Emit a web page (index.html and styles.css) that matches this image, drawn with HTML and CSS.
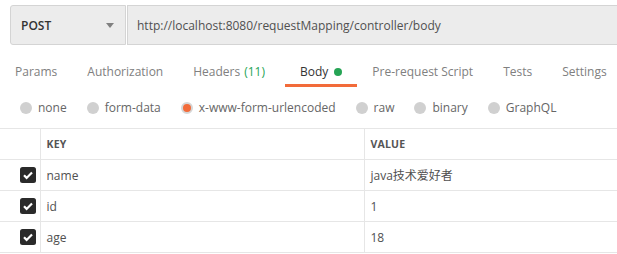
FILE: index.html
```html
<!DOCTYPE html>
<html>
<head>
<meta charset="utf-8">
<link rel="stylesheet" href="styles.css">
</head>
<body>
<div class="urlbar">
  <div class="method"><span class="method-name">POST</span><span class="caret"></span></div>
  <div class="url">http://localhost:8080/requestMapping/controller/body</div>
</div>
<div class="tabs">
  <div class="tab">Params</div>
  <div class="tab">Authorization</div>
  <div class="tab tab-headers">Headers <span class="count">(11)</span></div>
  <div class="tab active">Body <span class="dot"></span></div>
  <div class="tab">Pre-request Script</div>
  <div class="tab">Tests</div>
  <div class="tab">Settings</div>
</div>
<div class="radios">
  <div class="radio"><span class="circle"></span>none</div>
  <div class="radio"><span class="circle"></span>form-data</div>
  <div class="radio"><span class="circle checked"></span>x-www-form-urlencoded</div>
  <div class="radio"><span class="circle"></span>raw</div>
  <div class="radio"><span class="circle"></span>binary</div>
  <div class="radio"><span class="circle"></span>GraphQL</div>
</div>
<table class="params">
  <tr class="head"><th class="c-check"></th><th class="c-key">KEY</th><th>VALUE</th></tr>
  <tr><td class="c-check"><svg class="cb" width="16" height="16" viewBox="0 0 16 16"><rect width="16" height="16" rx="2.5" fill="#2a2a2a"/><path d="M4 8.3l2.6 2.6L12 5.4" fill="none" stroke="#fff" stroke-width="2.2"/></svg></td><td>name</td><td>java技术爱好者</td></tr>
  <tr><td class="c-check"><svg class="cb" width="16" height="16" viewBox="0 0 16 16"><rect width="16" height="16" rx="2.5" fill="#2a2a2a"/><path d="M4 8.3l2.6 2.6L12 5.4" fill="none" stroke="#fff" stroke-width="2.2"/></svg></td><td>id</td><td>1</td></tr>
  <tr><td class="c-check"><svg class="cb" width="16" height="16" viewBox="0 0 16 16"><rect width="16" height="16" rx="2.5" fill="#2a2a2a"/><path d="M4 8.3l2.6 2.6L12 5.4" fill="none" stroke="#fff" stroke-width="2.2"/></svg></td><td>age</td><td>18</td></tr>
</table>
</body>
</html>
```
FILE: styles.css
```css
body {
  margin: 0;
  background: #fff;
  font-family: "Open Sans", "Noto Sans CJK SC", sans-serif;
  font-size: 12px;
  color: #505050;
  overflow: hidden;
}
.urlbar {
  display: flex;
  margin: 5px 0 0 10px;
  height: 40px;
}
.method {
  box-sizing: border-box;
  width: 116px;
  background: #ececec;
  border: 1px solid #d4d4d4;
  border-radius: 3px 0 0 3px;
  display: flex;
  align-items: center;
  justify-content: space-between;
  padding: 0 11px 0 10px;
}
.method-name {
  color: #333;
  font-weight: 600;
}
.caret {
  width: 0;
  height: 0;
  border-left: 4px solid transparent;
  border-right: 4px solid transparent;
  border-top: 5px solid #808080;
}
.url {
  flex: 1;
  margin-left: 1px;
  background: #ececec;
  border: 1px solid #d4d4d4;
  border-right: none;
  display: flex;
  align-items: center;
  padding-left: 9px;
  color: #505050;
}
.tabs {
  display: flex;
  margin-top: 19px;
}
.tab {
  padding: 0 15px 4px;
  line-height: 16px;
  border-bottom: 3px solid transparent;
  color: #808080;
  display: flex;
  align-items: center;
  white-space: nowrap;
}
.tab-headers {
  padding-right: 20px;
}
.tab .count {
  color: #26a455;
  margin-left: 4px;
}
.tab.active {
  color: #333;
  border-bottom-color: #f26b3a;
}
.dot {
  width: 8px;
  height: 8px;
  border-radius: 50%;
  background: #26a455;
  margin-left: 6px;
}
.radios {
  display: flex;
  gap: 20px;
  margin-top: 13px;
  padding-left: 20px;
  line-height: 16px;
}
.radio {
  display: flex;
  align-items: center;
  gap: 6px;
  color: #666;
}
.circle {
  width: 12px;
  height: 12px;
  border-radius: 50%;
  background: #d0d0d0;
  box-sizing: border-box;
}
.circle.checked {
  background: #f26b3a;
  border: 2.5px solid #d6d6d6;
}
.params {
  margin-top: 12px;
  border-collapse: collapse;
  width: 100%;
  table-layout: fixed;
}
.params tr {
  height: 31px;
}
.params th, .params td {
  box-sizing: border-box;
  border-top: 1px solid #e6e6e6;
  border-bottom: 1px solid #e6e6e6;
  border-left: 1px solid #e6e6e6;
  padding: 0 0 0 6px;
  text-align: left;
}
.params th {
  font-size: 10.5px;
  font-weight: 700;
  color: #555;
  letter-spacing: 0.2px;
}
.params .c-check {
  width: 40px;
  border-left: none;
  padding: 0 4px 0 0;
  text-align: right;
}
.params .c-key {
  width: 324px;
}
.cb {
  display: block;
  margin-left: auto;
}
```
